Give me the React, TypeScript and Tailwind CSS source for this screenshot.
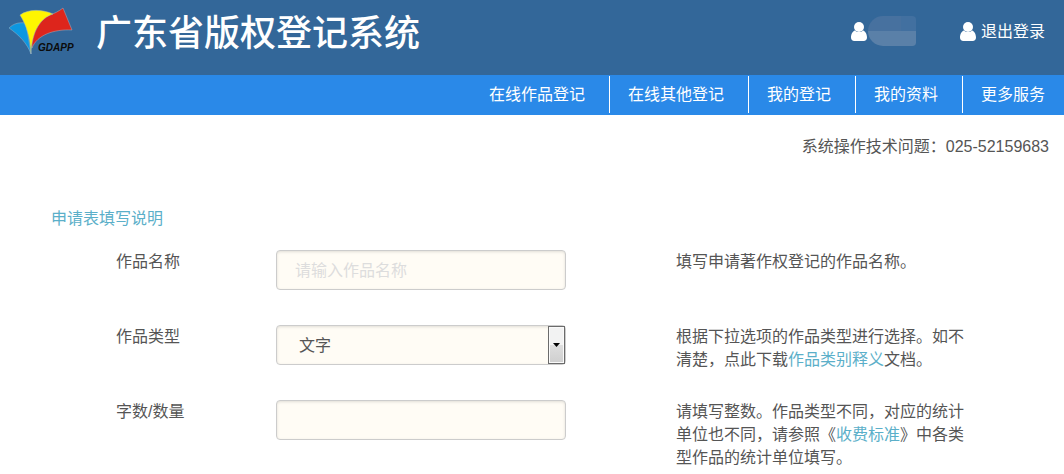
import { ReactNode } from "react"

const navItems = ["在线作品登记", "在线其他登记", "我的登记", "我的资料", "更多服务"]

const fieldClass =
    "h-10 w-full rounded border border-[#ccc] bg-[#fffcf5] pt-px text-base text-[#555] shadow-[inset_0_1px_3px_rgba(0,0,0,0.12)] outline-none placeholder:text-[#ddd]"

function Logo() {
    return (
        <svg className="h-[60px] w-[76px] shrink-0" viewBox="0 0 76 60" role="img" aria-label="GDAPP">
            <g stroke="#9db2c4" strokeWidth="0.5" strokeLinejoin="round">
                <path d="M9 28 C13 24 18 22 26 23 L31 54 C27 43 19 35 9 28 Z" fill="#0d97e0" />
                <path d="M32 48 C30 34 37 21 49 15 C54 14 59 11 63 8 L72 30 C54 29 37 35 32 48 Z" fill="#dd251c" />
                <path d="M20 15 C28 9 42 9 53 14 C41 18 32 30 31 54 C30 38 27 26 20 15 Z" fill="#fff500" />
            </g>
            <text
                x="38"
                y="51"
                fontFamily="'Liberation Sans Narrow', 'Liberation Sans', sans-serif"
                fontSize="10"
                fontWeight="700"
                fontStyle="italic"
                fill="#0b0b0b"
            >
                GDAPP
            </text>
        </svg>
    )
}

function UserIcon() {
    return (
        <svg className="h-[19px] w-4 shrink-0" viewBox="0 0 16 19" fill="#fff" aria-hidden="true">
            <path d="M12 8.500 C14.500 9 16 12.500 16 15.500 C16 17.800 14.600 19 12.700 19 H3.300 C1.400 19 0 17.800 0 15.500 C0 12.500 1.500 9 4 8.500 C5.100 9.600 6.500 10 8 10 C9.500 10 10.900 9.600 12 8.500 Z" />
            <circle cx="8" cy="5" r="5" />
        </svg>
    )
}

function Header() {
    return (
        <header className="flex h-[75px] items-start justify-between bg-[#336799] text-white">
            <div className="flex items-start">
                <Logo />
                <h1 className="mt-2 ml-5 text-[36px] leading-[52px] font-medium">广东省版权登记系统</h1>
            </div>
            <div className="mt-[15px] mr-[19px] flex h-8 items-center">
                <a href="#" className="flex items-center" aria-label="用户">
                    <UserIcon />
                    <span className="ml-px flex h-[30px] w-12 flex-col overflow-hidden rounded-l-2xl rounded-r-sm">
                        <span className="flex h-[15px]">
                            <span className="flex-1 bg-[#47719f]" />
                            <span className="w-[15px] bg-[#4270a0]" />
                        </span>
                        <span className="h-[15px] bg-[#5a80a8]" />
                    </span>
                </a>
                <a href="#" className="ml-11 flex items-center gap-[5px]">
                    <UserIcon />
                    退出登录
                </a>
            </div>
        </header>
    )
}

function Nav() {
    return (
        <nav className="h-10 bg-[#2a89e8] pt-px text-white">
            <ul className="flex justify-end">
                {navItems.map((item) => (
                    <li key={item} className="border-r border-white pr-6 pl-[18px] leading-[37px] last:border-r-0 last:pr-[19px]">
                        <a href="#">{item}</a>
                    </li>
                ))}
            </ul>
        </nav>
    )
}

function Row({ id, label, help, children }: { id: string; label: string; help: ReactNode; children: ReactNode }) {
    return (
        <div className="flex min-h-[75px] items-start">
            <label htmlFor={id} className="w-40 shrink-0">
                {label}
            </label>
            <div className="relative w-[290px] shrink-0">{children}</div>
            <p className="ml-[110px] max-w-[290px] flex-1">{help}</p>
        </div>
    )
}

function TextLink({ children }: { children: ReactNode }) {
    return (
        <a href="#" className="text-[#5bafc9]">
            {children}
        </a>
    )
}

export default function App() {
    return (
        <div className="min-h-screen bg-white font-['Liberation_Sans','Noto_Sans_CJK_SC',sans-serif] text-base leading-[23px] text-[#555]" lang="zh-CN">
            <Header />
            <Nav />
            <main>
                <p className="pt-5 pr-[15px] text-right">系统操作技术问题：025-52159683</p>
                <h2 className="mt-[49px] ml-[51px]">
                    <TextLink>申请表填写说明</TextLink>
                </h2>
                <form className="mt-5 ml-[116px]">
                    <Row id="name" label="作品名称" help="填写申请著作权登记的作品名称。">
                        <input id="name" type="text" placeholder="请输入作品名称" className={fieldClass + " px-[18px]"} />
                    </Row>
                    <Row
                        id="type"
                        label="作品类型"
                        help={
                            <>
                                根据下拉选项的作品类型进行选择。如不清楚，点此下载<TextLink>作品类别释义</TextLink>文档。
                            </>
                        }
                    >
                        <select id="type" defaultValue="文字" className={fieldClass + " appearance-none pr-6 pl-[22px]"}>
                            <option>文字</option>
                        </select>
                        <span className="pointer-events-none absolute top-px right-px flex h-[38px] w-[17px] items-center justify-center border border-[#6b6b6b] bg-linear-to-b from-[#f2f2f2] from-50% via-[#dedede] via-50% to-[#cfcfcf] shadow-[inset_0_0_0_1px_#fafafa]">
                            <svg className="h-1 w-[7px]" viewBox="0 0 7 4" aria-hidden="true">
                                <path d="M0 0 H7 L3.500 4 Z" fill="#000" />
                            </svg>
                        </span>
                    </Row>
                    <Row
                        id="count"
                        label="字数/数量"
                        help={
                            <>
                                请填写整数。作品类型不同，对应的统计单位也不同，请参照《<TextLink>收费标准</TextLink>》中各类型作品的统计单位填写。
                            </>
                        }
                    >
                        <input id="count" type="text" className={fieldClass + " px-[18px]"} />
                    </Row>
                </form>
            </main>
        </div>
    )
}
